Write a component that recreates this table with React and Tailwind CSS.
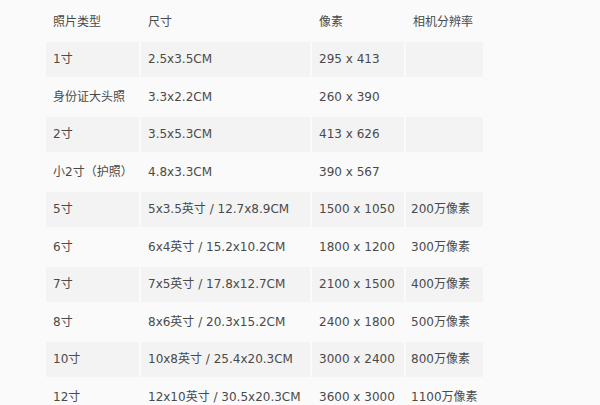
const rows = [
  ["1寸", "2.5x3.5CM", "295 x 413", ""],
  ["身份证大头照", "3.3x2.2CM", "260 x 390", ""],
  ["2寸", "3.5x5.3CM", "413 x 626", ""],
  ["小2寸（护照）", "4.8x3.3CM", "390 x 567", ""],
  ["5寸", "5x3.5英寸 / 12.7x8.9CM", "1500 x 1050", "200万像素"],
  ["6寸", "6x4英寸 / 15.2x10.2CM", "1800 x 1200", "300万像素"],
  ["7寸", "7x5英寸 / 17.8x12.7CM", "2100 x 1500", "400万像素"],
  ["8寸", "8x6英寸 / 20.3x15.2CM", "2400 x 1800", "500万像素"],
  ["10寸", "10x8英寸 / 25.4x20.3CM", "3000 x 2400", "800万像素"],
  ["12寸", "12x10英寸 / 30.5x20.3CM", "3600 x 3000", "1100万像素"],
];

const App = () => {
  return (
    <div
      className="w-[600px] h-[405px] overflow-hidden bg-[#fafafa] text-[#4a4a4a] text-[12px] pt-[2px] pl-[44px]"
      style={{ fontFamily: '"DejaVu Sans", "Noto Sans CJK SC", sans-serif' }}>
      <table className="border-separate border-spacing-[2px] table-fixed w-[441px]">
        <colgroup>
          <col className="w-[93px]" />
          <col className="w-[169px]" />
          <col className="w-[92px]" />
          <col className="w-[77px]" />
        </colgroup>
        <thead>
          <tr>
            {["照片类型", "尺寸", "像素", "相机分辨率"].map((h) => (
              <th key={h} className="h-[35.5px] px-[7px] text-left font-normal whitespace-nowrap">
                {h}
              </th>
            ))}
          </tr>
        </thead>
        <tbody>
          {rows.map((r, i) => (
            <tr key={r[0]}>
              {r.map((c, j) => (
                <td
                  key={j}
                  className={`h-[35.5px] whitespace-nowrap ${j === 3 ? "pl-[5px]" : "px-[7px]"} ${
                    i % 2 === 0 ? "bg-[#f3f3f3]" : ""
                  }`}>
                  {c}
                </td>
              ))}
            </tr>
          ))}
        </tbody>
      </table>
    </div>
  );
};

export default App;
